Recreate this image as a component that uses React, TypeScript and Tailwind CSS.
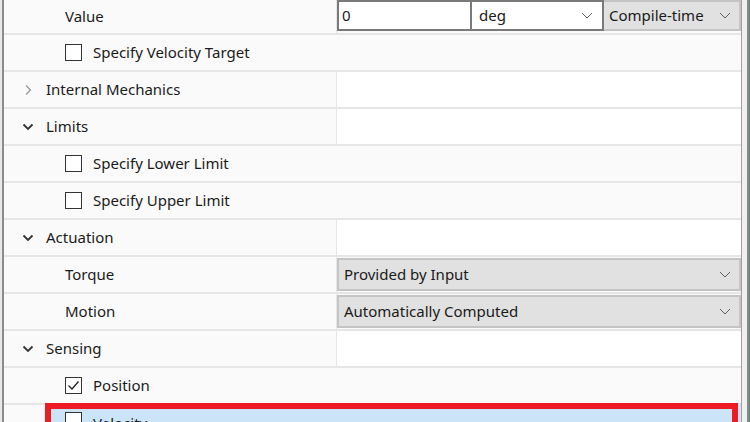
import React from 'react';

const font = { fontFamily: '"Noto Sans", "Open Sans", Arial, sans-serif' };

function Chevron({ open }: { open: boolean }) {
  return open ? (
    <svg width="12" height="8" viewBox="0 0 12 8" className="shrink-0">
      <polyline points="1.5,1.5 6,6 10.5,1.5" fill="none" stroke="#333" strokeWidth="1.8" />
    </svg>
  ) : (
    <svg width="12" height="12" viewBox="0 0 12 12" className="shrink-0">
      <polyline points="4,1.5 8.5,6 4,10.5" fill="none" stroke="#9a9a9a" strokeWidth="1.3" />
    </svg>
  );
}

function DropArrow() {
  return (
    <svg width="12" height="7" viewBox="0 0 12 7" className="shrink-0">
      <polyline points="1,1 6,6 11,1" fill="none" stroke="#606060" strokeWidth="1" />
    </svg>
  );
}

function Check({ checked }: { checked?: boolean }) {
  return (
    <svg width="17" height="17" viewBox="0 0 17 17" className="shrink-0">
      <rect x="0.5" y="0.5" width="16" height="16" fill="#fff" stroke="#333" strokeWidth="1" />
      {checked && <polyline points="3.5,8.5 7,12 13.5,4.5" fill="none" stroke="#222" strokeWidth="1.3" />}
    </svg>
  );
}

// row with a left label and an empty or filled right cell
function SplitRow({ children, right, rightBg = 'bg-white' }: { children: React.ReactNode; right?: React.ReactNode; rightBg?: string }) {
  return (
    <div className="flex shrink-0 h-[37px] border-b-2 border-[#e6e6e6]">
      <div className="w-[332px] flex items-center">{children}</div>
      <div className="w-px bg-[#e6e6e6]" />
      <div className={`w-[404px] flex ${rightBg}`}>{right}</div>
    </div>
  );
}

function Header({ label, open }: { label: string; open: boolean }) {
  return (
    <SplitRow>
      <div className="pl-[18px] w-[42px] flex items-center">
        <Chevron open={open} />
      </div>
      <span>{label}</span>
    </SplitRow>
  );
}

function CheckRow({ label, checked }: { label: string; checked?: boolean }) {
  return (
    <div className="flex shrink-0 items-center h-[37px] border-b-2 border-[#e6e6e6] pl-[61px] gap-[11px]">
      <Check checked={checked} />
      <span>{label}</span>
    </div>
  );
}

function Dropdown({ value }: { value: string }) {
  return (
    <div className="flex-1 my-[1px] flex items-center justify-between border-2 border-[#c4c4c4] bg-[#e1e1e1] pl-[5px] pr-[8px]">
      <span>{value}</span>
      <DropArrow />
    </div>
  );
}

export default function App() {
  return (
    <div className="w-[750px] h-[422px] overflow-hidden flex bg-[#e8e8e8] text-[15px] text-[#1a1a1a]" style={font}>
      <div className="w-[2px]" />
      <div className="w-[2px] bg-[#8c8c8c]" />

      {/* property grid */}
      <div className="w-[737px] bg-[#fafafa] flex flex-col">
        {/* Value row */}
        <div className="flex shrink-0 h-[35px] border-b-2 border-[#e6e6e6]">
          <div className="w-[332px] flex items-center pl-[61px]">Value</div>
          <div className="w-px bg-[#e6e6e6]" />
          <div className="w-[404px] flex h-[31px]">
            <div className="w-[135px] border-2 border-[#7a7a7a] bg-white flex items-center pl-[3px]">0</div>
            <div className="w-[132px] border-2 border-l-0 border-[#7a7a7a] bg-white flex items-center justify-between pl-[7px] pr-[9px]">
              <span>deg</span>
              <DropArrow />
            </div>
            <div className="w-[137px] border-2 border-l-0 border-[#c4c4c4] bg-[#e1e1e1] flex items-center justify-between pl-[5px] pr-[8px]">
              <span>Compile-time</span>
              <DropArrow />
            </div>
          </div>
        </div>

        <CheckRow label="Specify Velocity Target" />
        <Header label="Internal Mechanics" open={false} />
        <Header label="Limits" open />
        <CheckRow label="Specify Lower Limit" />
        <CheckRow label="Specify Upper Limit" />
        <Header label="Actuation" open />
        <SplitRow right={<Dropdown value="Provided by Input" />} rightBg="bg-[#fafafa]">
          <span className="pl-[61px]">Torque</span>
        </SplitRow>
        <SplitRow right={<Dropdown value="Automatically Computed" />} rightBg="bg-[#fafafa]">
          <span className="pl-[61px]">Motion</span>
        </SplitRow>
        <Header label="Sensing" open />
        <CheckRow label="Position" checked />

        {/* selected row */}
        <div className="flex shrink-0 h-[37px] pl-[41px]">
          <div className="flex-1 bg-[#cce4f7] -mt-[2px]">
            <div className="mr-[3px] h-[60px] border-[6px] border-[#ed1c24] flex items-start pt-[3px] pl-[14px] gap-[11px]">
              <Check />
              <span>Velocity</span>
            </div>
          </div>
        </div>
      </div>

      <div className="w-px bg-[#a0a0a0]" />
      <div className="w-[5px] bg-[#f0f0f0]" />
      <div className="w-[2px] bg-[#8a8a8a]" />
      <div className="w-px bg-[#5a8a78]" />
    </div>
  );
}
